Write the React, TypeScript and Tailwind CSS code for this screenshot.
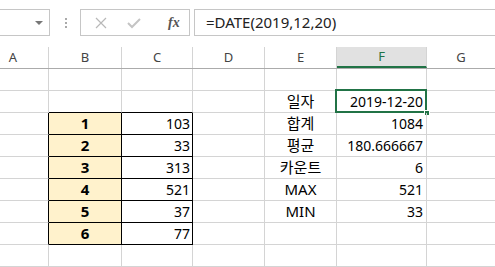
import React from 'react';

const cols = [
  { key: 'A', w: 'w-[49px]' },
  { key: 'B', w: 'w-[73px]' },
  { key: 'C', w: 'w-[71px]' },
  { key: 'D', w: 'w-[72px]' },
  { key: 'E', w: 'w-[72px]' },
  { key: 'F', w: 'w-[90px]' },
  { key: 'G', w: 'flex-1' },
];

type Row = { b?: string; c?: string; e?: string; f?: string };

const rows: Row[] = [
  {},
  { e: '일자', f: '2019-12-20' },
  { b: '1', c: '103', e: '합계', f: '1084' },
  { b: '2', c: '33', e: '평균', f: '180.666667' },
  { b: '3', c: '313', e: '카운트', f: '6' },
  { b: '4', c: '521', e: 'MAX', f: '521' },
  { b: '5', c: '37', e: 'MIN', f: '33' },
  { b: '6', c: '77' },
  {},
];

const grid = 'border-[#d4d4d4]';

const App: React.FC = () => {
  return (
    <div className="w-[495px] h-[267px] bg-white overflow-hidden text-black" style={{ fontFamily: '"Noto Sans", "Noto Sans CJK KR", sans-serif' }}>
      {/* Formula bar */}
      <div className="h-[47px] flex items-start pt-[9px]">
        <div className="w-[50px] h-[27px] border border-l-0 border-[#c6c6c6] flex items-center justify-end pr-[6px]">
          <div className="w-0 h-0 border-l-[4px] border-r-[4px] border-t-[4px] border-l-transparent border-r-transparent border-t-[#777]" />
        </div>
        <div className="w-[30px] h-[27px] flex flex-col items-center justify-center gap-[2px] pl-[1px]">
          <div className="w-[2px] h-[2px] bg-[#aaa]" />
          <div className="w-[2px] h-[2px] bg-[#aaa]" />
          <div className="w-[2px] h-[2px] bg-[#aaa]" />
        </div>
        <div className="w-[110px] h-[27px] border border-[#c6c6c6] flex items-center">
          <svg width="12" height="12" viewBox="0 0 12 12" className="ml-[14px]">
            <path d="M1 1L11 11M11 1L1 11" stroke="#b8b8b8" strokeWidth="1.2" />
          </svg>
          <svg width="14" height="12" viewBox="0 0 14 12" className="ml-[20px]">
            <path d="M1 6L5 10L13 2" stroke="#c4c4c4" strokeWidth="2" fill="none" />
          </svg>
          <span className="ml-[27px] text-[14px] italic font-bold text-[#555]" style={{ fontFamily: '"Liberation Serif", serif' }}>fx</span>
        </div>
        <div className="ml-[4px] flex-1 h-[27px] border border-r-0 border-[#c6c6c6] flex items-center pl-[11px] text-[15px] text-[#222]">
          =DATE(2019,12,20)
        </div>
      </div>

      {/* Column headers */}
      <div className="h-[22px] flex border-b border-[#ababab]">
        {cols.map((c) => (
          <div
            key={c.key}
            className={`${c.w} h-full flex items-center text-[13px] ${
              c.key === 'F'
                ? 'bg-[#e1e1e1] text-[#217346] border-b-2 border-b-[#217346] border-r border-r-[#d4d4d4] justify-center'
                : c.key === 'A'
                ? 'text-[#444] border-r border-[#d4d4d4] justify-center pr-[22px]'
                : c.key === 'G'
                ? 'text-[#444] justify-center'
                : 'text-[#444] border-r border-[#d4d4d4] justify-center'
            }`}
          >
            {c.key}
          </div>
        ))}
      </div>

      {/* Cells */}
      {rows.map((r, i) => {
        const inTable = i >= 2 && i <= 7;
        const aboveTable = i === 1;
        return (
          <div key={i} className="h-[22px] flex">
            <div className={`w-[49px] border-b ${grid} border-r ${inTable ? 'border-r-black' : ''}`} />
            <div
              className={`w-[73px] border-b border-r ${grid} flex items-center justify-center text-[15px] font-bold ${
                inTable ? 'bg-[#fff2cc] border-r-black border-b-black' : aboveTable ? 'border-b-black' : ''
              }`}
            >
              {r.b}
            </div>
            <div
              className={`w-[71px] border-b border-r ${grid} flex items-center justify-end pr-[2px] text-[14px] ${
                inTable ? 'border-r-black border-b-black' : aboveTable ? 'border-b-black' : ''
              }`}
            >
              {r.c}
            </div>
            <div className={`w-[72px] border-b border-r ${grid}`} />
            <div className={`w-[72px] border-b border-r ${grid} flex items-center justify-center text-[15px]`}>{r.e}</div>
            <div className={`relative w-[90px] border-b border-r ${grid} flex items-center justify-end pr-[3px] text-[14px]`}>
              {r.f}
              {i === 1 && (
                <>
                  <div className="absolute left-[-2px] top-[-2px] right-[-1px] bottom-[-1px] border-2 border-[#217346]" />
                  <div className="absolute right-[-4px] bottom-[-4px] w-[6px] h-[6px] bg-[#217346] border border-white" />
                </>
              )}
            </div>
            <div className={`flex-1 border-b ${grid}`} />
          </div>
        );
      })}
    </div>
  );
};

export default App;
